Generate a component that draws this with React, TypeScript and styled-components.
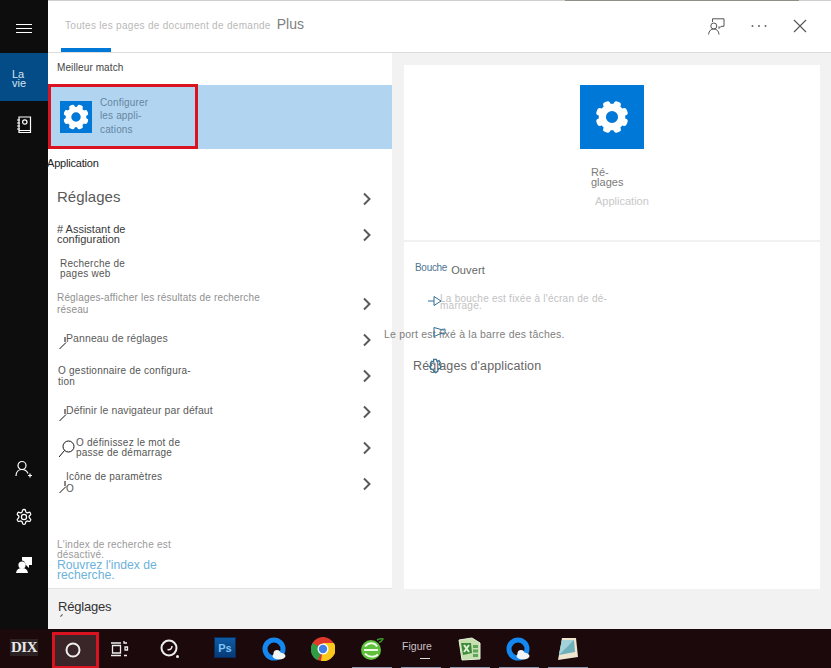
import styled, { createGlobalStyle } from 'styled-components';

const Global = createGlobalStyle`
  html, body {
    margin: 0;
    padding: 0;
    width: 831px;
    height: 668px;
    overflow: hidden;
    background: #f2f2f2;
    font-family: "Liberation Sans", Arial, sans-serif;
  }
  * { box-sizing: border-box; }
`;

const Page = styled.div`
  width: 831px;
  height: 668px;
  display: flex;
  flex-direction: column;
  overflow: hidden;
`;

const Window = styled.div`
  height: 629px;
  display: flex;
  border-top: 1px solid #cfcfcf;
  border-image: linear-gradient(to right, #cfcfcf 68%, #8f9088 68%, #8f9088 96%, #cfcfcf 96%) 1;
`;

const Sidebar = styled.nav`
  width: 48px;
  background: #0d0d0d;
  display: flex;
  flex-direction: column;
  padding-bottom: 40px;
  margin-top: -1px;
`;

const SideButton = styled.div<{ $height?: number; $pad?: number }>`
  height: ${({ $height }) => $height ?? 48}px;
  padding-top: ${({ $pad }) => $pad ?? 0}px;
  display: flex;
  align-items: center;
  justify-content: center;
  color: #fff;
  flex-shrink: 0;
`;

const LifeTab = styled.div`
  height: 48px;
  background: #044c88;
  color: #d5e4f0;
  font-size: 11px;
  line-height: 9px;
  padding: 17px 0 0 12px;
  flex-shrink: 0;
`;

const SideSpacer = styled.div`
  flex: 1;
`;

const Content = styled.div`
  flex: 1;
  display: flex;
  flex-direction: column;
  min-width: 0;
`;

const Header = styled.header`
  height: 52px;
  background: #fff;
  border-bottom: 1px solid #dcdcdc;
  display: flex;
  justify-content: space-between;
  padding-left: 13px;
  flex-shrink: 0;
`;

const Tab = styled.div`
  width: 50px;
  height: 51px;
  border-bottom: 4px solid #0078d7;
  display: flex;
  white-space: nowrap;
  align-items: baseline;
  gap: 6px;
  padding: 15px 0 0 4px;
`;

const TabMuted = styled.span`
  font-size: 10px;
  letter-spacing: 0.3px;
  color: #b9b9b9;
`;

const TabMore = styled.span`
  font-size: 14px;
  color: #808080;
`;

const HeaderActions = styled.div`
  display: flex;
  align-items: center;
  gap: 26px;
  padding: 0 24px 1px 0;
  color: #555;
`;

const Body = styled.div`
  flex: 1;
  display: flex;
  min-height: 0;
`;

const LeftColumn = styled.section`
  width: 344px;
  display: flex;
  flex-direction: column;
`;

const ResultList = styled.div`
  flex: 1;
  background: #fff;
  border-bottom: 1px solid #e2e2e2;
`;

const BestLabel = styled.div`
  height: 32px;
  padding: 9px 0 0 9px;
  font-size: 10px;
  letter-spacing: 0.1px;
  color: #444;
`;

const BestMatch = styled.div`
  height: 64px;
  background: #b1d5f1;
  position: relative;
  display: flex;
  align-items: center;
  gap: 8px;
  padding-left: 12px;
`;

const RedFrame = styled.div<{ $w: number; $h: number }>`
  position: absolute;
  left: 0;
  top: -1px;
  width: ${({ $w }) => $w}px;
  height: ${({ $h }) => $h}px;
  border: 3px solid #d9131f;
  pointer-events: none;
`;

const AppTile = styled.div<{ $size: number }>`
  width: ${({ $size }) => $size}px;
  height: ${({ $size }) => $size}px;
  background: #0078d7;
  display: flex;
  align-items: center;
  justify-content: center;
  flex-shrink: 0;
`;

const BestText = styled.div`
  font-size: 10px;
  line-height: 13.5px;
  letter-spacing: 0.15px;
  color: #66859f;
  margin-top: -2px;
`;

const CategoryLabel = styled.div`
  height: 32px;
  padding: 8px 0 0 0;
  margin-left: -1px;
  font-size: 11px;
  letter-spacing: -0.2px;
  color: #222;
`;

const Row = styled.div<{ $height?: number; $indent?: number }>`
  height: ${({ $height }) => $height ?? 36}px;
  position: relative;
  display: flex;
  align-items: center;
  justify-content: space-between;
  padding: 0 20px 0 ${({ $indent }) => $indent ?? 9}px;
`;

type Tone = 'title' | 'strong' | 'soft' | 'faint' | 'mid';

const RowText = styled.div<{ $tone: Tone; $top?: number; $leading?: number }>`
  margin-top: ${({ $top }) => $top ?? 0}px;
  white-space: pre-line;
  ${({ $tone }) =>
    ({
      title: 'font-size: 15px; color: #595959;',
      strong: 'font-size: 11px; line-height: 10px; color: #3a3a3a;',
      soft: 'font-size: 10px; line-height: 10px; letter-spacing: 0.24px; color: #555;',
      faint: 'font-size: 10px; line-height: 12px; letter-spacing: 0.17px; color: #8f8f8f;',
      mid: 'font-size: 10.5px; line-height: 11px; letter-spacing: 0.1px; color: #5c5c5c;',
    })[$tone]}
  ${({ $leading }) => $leading && `line-height: ${$leading}px;`}
`;

const SearchMark = styled.svg`
  position: absolute;
  left: 11px;
  top: 7px;
`;

const IndexNote = styled.div`
  padding: 38px 0 0 9px;
`;

const NoteText = styled.div`
  font-size: 10px;
  line-height: 10px;
  letter-spacing: 0.22px;
  color: #999;
  white-space: pre-line;
`;

const NoteLink = styled.div`
  font-size: 12.2px;
  line-height: 10px;
  color: #6db2da;
  white-space: pre-line;
`;

const FooterBar = styled.div`
  height: 40px;
  background: #f2f2f2;
  position: relative;
  padding: 10px 0 0 10px;
  font-size: 13px;
  letter-spacing: -0.2px;
  color: #333;
  flex-shrink: 0;
`;

const FooterTick = styled.span`
  position: absolute;
  left: 12px;
  top: 26px;
  width: 3px;
  height: 1px;
  background: #555;
  transform: rotate(-45deg);
`;

const DetailPanel = styled.section`
  width: 416px;
  margin: 12px 0 40px 12px;
  background: #fff;
  display: flex;
  flex-direction: column;
`;

const DetailHero = styled.div`
  height: 177px;
  border-bottom: 2px solid #f1f1f1;
  padding: 20px 0 0 176px;
`;

const HeroName = styled.div`
  font-size: 11px;
  line-height: 10px;
  color: #7b7b7b;
  margin: 18px 0 0 11px;
  white-space: pre-line;
`;

const HeroKind = styled.div`
  font-size: 11px;
  color: #c8c8c8;
  margin: 8px 0 0 15px;
`;

const ActionList = styled.div`
  display: flex;
  flex-direction: column;
`;

const OpenRow = styled.div`
  display: flex;
  align-items: flex-start;
  gap: 4px;
  padding: 20px 0 0 11px;
`;

const MouthLabel = styled.span`
  font-size: 10px;
  letter-spacing: -0.3px;
  color: #4f7590;
`;

const OpenLabel = styled.span`
  font-size: 11px;
  letter-spacing: 0.15px;
  color: #666;
  margin-top: 2px;
`;

const PinRow = styled.div<{ $indent: number; $top: number }>`
  position: relative;
  margin: ${({ $top }) => $top}px 0 0 ${({ $indent }) => $indent}px;
`;

const PinText = styled.div`
  font-size: 10px;
  line-height: 7px;
  letter-spacing: 0.25px;
  color: #c2c2c2;
  white-space: pre-line;
`;

const PinWide = styled.div`
  font-size: 10.5px;
  letter-spacing: 0.2px;
  color: #808080;
  white-space: nowrap;
`;

const PinMark = styled.svg<{ $left: number; $top: number }>`
  position: absolute;
  left: ${({ $left }) => $left}px;
  top: ${({ $top }) => $top}px;
`;

const AppSettings = styled.div`
  position: relative;
  margin: 19px 0 0 9px;
  font-size: 12.5px;
  letter-spacing: 0.13px;
  color: #666;
`;

const Taskbar = styled.footer`
  height: 39px;
  background: #1c090c;
  display: flex;
  align-items: center;
  position: relative;
`;

const TaskSlot = styled.div<{ $width: number }>`
  width: ${({ $width }) => $width}px;
  height: 100%;
  display: flex;
  align-items: center;
  justify-content: center;
  flex-shrink: 0;
  position: relative;
`;

const SearchSlot = styled.div`
  width: 47px;
  height: 36px;
  margin: 3px 0 0 4px;
  padding: 0 6px 2px 0;
  background: #3a2628;
  border: 3px solid #d9131f;
  border-bottom-width: 2px;
  display: flex;
  align-items: center;
  justify-content: center;
  flex-shrink: 0;
`;

const DixLogo = styled.div`
  font-family: "Liberation Serif", serif;
  font-weight: 700;
  font-size: 15px;
  letter-spacing: -0.5px;
  color: #e8e8e8;
  background: #2c2224;
  padding: 0 1px;
  margin-top: -2px;
`;

const PsTile = styled.div`
  width: 22px;
  height: 21px;
  background: linear-gradient(#0e5ca4, #073a78);
  border: 1px solid #072c5c;
  color: #7fc4f4;
  font-size: 11px;
  font-weight: 700;
  display: flex;
  align-items: center;
  justify-content: center;
  margin-top: -2px;
`;

const FigureLabel = styled.div`
  font-size: 10.5px;
  color: #c9c4c6;
  margin-top: -6px;
`;

const FigureUnderline = styled.span`
  position: absolute;
  left: 25px;
  bottom: 9px;
  width: 10px;
  height: 1px;
  background: #ddd;
`;

const RunningMark = styled.span<{ $left: number; $width: number }>`
  position: absolute;
  bottom: 0;
  left: ${({ $left }) => $left}px;
  width: ${({ $width }) => $width}px;
  height: 1px;
  background: #8d98ad;
`;

function Gear({ size }: { size: number }) {
  const teeth = [0, 45, 90, 135, 180, 225, 270, 315];
  return (
    <svg width={size} height={size} viewBox="0 0 32 32">
      {teeth.map((a) => (
        <rect key={a} x="12.7" y="1.5" width="6.6" height="8" rx="2.4" fill="#fff" transform={`rotate(${a + 22.5} 16 16)`} />
      ))}
      <circle cx="16" cy="16" r="8.6" fill="none" stroke="#fff" strokeWidth="6.4" />
    </svg>
  );
}

function Chevron() {
  return (
    <svg width="10" height="14" viewBox="0 0 10 14" fill="none">
      <path d="M2 1.5 7.5 7 2 12.5" stroke="#5a5a5a" strokeWidth="2" />
    </svg>
  );
}

function Hamburger() {
  return (
    <svg width="16" height="10" viewBox="0 0 16 10" stroke="#fff" strokeWidth="1">
      <path d="M0 .5h16M0 4.5h16M0 8.5h16" />
    </svg>
  );
}

function NotebookIcon() {
  return (
    <svg width="16" height="18" viewBox="0 0 16 18" fill="none" stroke="#fff" strokeWidth="1.2">
      <path d="M3 1h11.5v15.5H3zM1 4h3M1 7h3M1 10h3M1 13h3M3 14.5h11.5" />
      <circle cx="8.8" cy="6" r="2.2" />
    </svg>
  );
}

function AddUserIcon() {
  return (
    <svg width="18" height="18" viewBox="0 0 18 18" fill="none" stroke="#fff" strokeWidth="1.2">
      <circle cx="7" cy="5.5" r="4" />
      <path d="M1 16c0-4 2.500-6.500 6-6.500s5 1.500 6 4M13 15.500h4M15 13.500v4" />
    </svg>
  );
}

function OutlineGear() {
  return (
    <svg width="18" height="18" viewBox="0 0 24 24" fill="none" stroke="#fff" strokeWidth="1.7" strokeLinejoin="round">
      <path d="M12.2 2h-.4a2 2 0 0 0-2 2v.2a2 2 0 0 1-1 1.700l-.4.200a2 2 0 0 1-2 0l-.2-.1a2 2 0 0 0-2.700.7l-.2.400a2 2 0 0 0 .7 2.700l.2.100a2 2 0 0 1 1 1.700v.500a2 2 0 0 1-1 1.700l-.2.100a2 2 0 0 0-.7 2.700l.2.400a2 2 0 0 0 2.700.7l.2-.1a2 2 0 0 1 2 0l.4.200a2 2 0 0 1 1 1.700v.200a2 2 0 0 0 2 2h.4a2 2 0 0 0 2-2v-.2a2 2 0 0 1 1-1.700l.4-.2a2 2 0 0 1 2 0l.2.100a2 2 0 0 0 2.700-.7l.2-.4a2 2 0 0 0-.7-2.700l-.2-.1a2 2 0 0 1-1-1.700v-.500a2 2 0 0 1 1-1.700l.2-.1a2 2 0 0 0 .7-2.700l-.2-.4a2 2 0 0 0-2.700-.7l-.2.100a2 2 0 0 1-2 0l-.4-.2a2 2 0 0 1-1-1.700V4a2 2 0 0 0-2-2z" />
      <circle cx="12" cy="12" r="3.400" />
    </svg>
  );
}

function FeedbackIcon() {
  return (
    <svg width="16" height="18" viewBox="0 0 16 18" fill="#fff">
      <circle cx="6" cy="9" r="3.600" />
      <path d="M0 17c.5-3.500 2.500-5 6-5s5.500 1.500 6 5z" />
      <path d="M6 1h10v8h-3v3l-3-3H9.500C9.500 6.500 8.500 5 6 4.600z" />
    </svg>
  );
}

function HeaderFeedback() {
  return (
    <svg width="17" height="17" viewBox="0 0 17 17" fill="none" stroke="#555" strokeWidth="1">
      <path d="M4.500 4V.8h11.500v7.500h-3l-2 2.200V8.300" />
      <circle cx="5.800" cy="8" r="3" />
      <path d="M.6 16.500c.3-3.500 2-5.500 5.200-5.500s4.900 2 5.200 5.500" />
    </svg>
  );
}

function Dots() {
  return (
    <svg width="16" height="4" viewBox="0 0 16 4" fill="#666">
      <circle cx="1.500" cy="2" r="1" />
      <circle cx="8" cy="2" r="1" />
      <circle cx="14.500" cy="2" r="1" />
    </svg>
  );
}

function CloseIcon() {
  return (
    <svg width="14" height="14" viewBox="0 0 14 14" stroke="#555" strokeWidth="1.100">
      <path d="M1 1l12 12M13 1 1 13" />
    </svg>
  );
}

function TaskViewIcon() {
  return (
    <svg width="18" height="18" viewBox="0 0 18 18" fill="none" stroke="#eee" strokeWidth="1.300">
      <path d="M0 3h10M0 15.500h10M1.500 5.500h8v7.500h-8zM13 1v2h3M13 15.500h3M14 7h2.500v3H14z" />
    </svg>
  );
}

function CortanaDial() {
  return (
    <svg width="22" height="22" viewBox="0 0 22 22" fill="none" stroke="#eee">
      <circle cx="10" cy="10" r="7.500" strokeWidth="2" />
      <path d="M13 8c0 3-2 4-4.500 3.500" strokeWidth="1.500" />
      <circle cx="18.500" cy="18.500" r="1.500" fill="#eee" stroke="none" />
    </svg>
  );
}

function CloudQ() {
  return (
    <svg width="24" height="24" viewBox="0 0 24 24" fill="none">
      <circle cx="12" cy="12" r="9" stroke="#1488f0" strokeWidth="5" />
      <ellipse cx="17" cy="19" rx="6.500" ry="3.500" fill="#f3f5f7" />
      <circle cx="15" cy="16.500" r="3.500" fill="#f3f5f7" />
    </svg>
  );
}

function ChromeIcon() {
  return (
    <svg width="24" height="24" viewBox="0 0 24 24">
      <circle cx="12" cy="12" r="12" fill="#e0392c" />
      <path d="M12 12 1.600 6a12 12 0 0 0 5 17.200z" fill="#2f9c46" />
      <path d="M12 6h10.900A12 12 0 0 1 10 23.800L12 12z" fill="#f8c91c" />
      <circle cx="12" cy="12" r="5.500" fill="#fff" />
      <circle cx="12" cy="12" r="4.200" fill="#3f7fe6" />
    </svg>
  );
}

function GreenBrowser() {
  return (
    <svg width="24" height="24" viewBox="0 0 24 24" fill="none">
      <circle cx="11" cy="13" r="10" fill="#5fc03c" />
      <path d="M4 13h14M5 9.500c3-4.500 10-4.500 12 0M5 16.500c3 4 10 4 13 1" stroke="#eefbe6" strokeWidth="2" />
      <path d="M17 3c3-1.500 5-1.500 6-1-1 2-2.500 3-4 3.500" stroke="#3d9a2a" strokeWidth="1.500" />
    </svg>
  );
}

function SheetIcon() {
  return (
    <svg width="24" height="24" viewBox="0 0 24 24">
      <path d="M2 3 15 1l8 5v16L5 23z" fill="#c5e0ae" stroke="#e8f2dd" />
      <path d="M4 6h10l1 10-9 2z" fill="#3c8a3c" />
      <path d="M7 8l5 7M12 8l-5 7" stroke="#dff0d0" strokeWidth="2" />
      <path d="M16 8h5v3h-5zM16 12.500h5v3h-5zM16 17h5v3h-5z" fill="#5fa55a" />
    </svg>
  );
}

function NotepadIcon() {
  return (
    <svg width="24" height="24" viewBox="0 0 24 24">
      <path d="M7 1h14l2 19-20 3z" fill="#eee6cf" />
      <path d="M7 3h12l1 12-16 3z" fill="#6fb0bd" />
      <path d="M7 3h12L4 18z" fill="#a3d2d8" />
    </svg>
  );
}

const searchRows = [
  { id: 'panel', text: 'Panneau de réglages', tone: 'mid' as Tone, indent: 18, top: -3, leading: 0, mark: 'stroke' },
  { id: 'manager', text: 'O gestionnaire de configura-\ntion', tone: 'soft' as Tone, indent: 10, top: 0, leading: 11, mark: '' },
  { id: 'browser', text: 'Définir le navigateur par défaut', tone: 'mid' as Tone, indent: 18, top: -4, leading: 0, mark: 'stroke' },
  { id: 'password', text: 'O définissez le mot de\npasse de démarrage', tone: 'soft' as Tone, indent: 28, top: 0, leading: 0, mark: 'loupe' },
  { id: 'icon', text: 'Icône de paramètres\nO', tone: 'soft' as Tone, indent: 18, top: -3, leading: 12, mark: 'stroke' },
];

function SearchGlyph({ kind }: { kind: string }) {
  return (
    <SearchMark width="20" height="24" viewBox="0 0 20 24" fill="none" stroke="#111" strokeWidth="1">
      {kind === 'loupe' ? (
        <>
          <circle cx="9.500" cy="9.500" r="5.500" />
          <path d="M5.500 13.500 0 20" />
        </>
      ) : (
        <path d="M6 8v5M7 13.500 0.500 20" />
      )}
    </SearchMark>
  );
}

export default function App() {
  return (
    <Page>
      <Global />
      <Window>
        <Sidebar>
          <SideButton $height={53} $pad={5}>
            <Hamburger />
          </SideButton>
          <LifeTab>
            La
            <br />
            vie
          </LifeTab>
          <SideButton>
            <NotebookIcon />
          </SideButton>
          <SideSpacer />
          <SideButton>
            <AddUserIcon />
          </SideButton>
          <SideButton>
            <OutlineGear />
          </SideButton>
          <SideButton>
            <FeedbackIcon />
          </SideButton>
        </Sidebar>
        <Content>
          <Header>
            <Tab>
              <TabMuted>Toutes les pages de document de demande</TabMuted>
              <TabMore>Plus</TabMore>
            </Tab>
            <HeaderActions>
              <HeaderFeedback />
              <Dots />
              <CloseIcon />
            </HeaderActions>
          </Header>
          <Body>
            <LeftColumn>
              <ResultList>
                <BestLabel>Meilleur match</BestLabel>
                <BestMatch>
                  <RedFrame $w={150} $h={65} />
                  <AppTile $size={32}>
                    <Gear size={28} />
                  </AppTile>
                  <BestText>
                    Configurer
                    <br />
                    les appli-
                    <br />
                    cations
                  </BestText>
                </BestMatch>
                <CategoryLabel>Application</CategoryLabel>
                <Row>
                  <RowText $tone="title" $top={-6}>
                    Réglages
                  </RowText>
                  <Chevron />
                </Row>
                <Row>
                  <RowText $tone="strong" $top={-2}>
                    {'# Assistant de\nconfiguration'}
                  </RowText>
                  <Chevron />
                </Row>
                <Row $height={32} $indent={12}>
                  <RowText $tone="soft" $top={-1}>
                    {'Recherche de\npages web'}
                  </RowText>
                </Row>
                <Row $height={37}>
                  <RowText $tone="faint">{'Réglages-afficher les résultats de recherche\nréseau'}</RowText>
                  <Chevron />
                </Row>
                {searchRows.map((row) => (
                  <Row key={row.id} $indent={row.indent}>
                    {row.mark && <SearchGlyph kind={row.mark} />}
                    <RowText $tone={row.tone} $top={row.top} $leading={row.leading}>
                      {row.text}
                    </RowText>
                    <Chevron />
                  </Row>
                ))}
                <IndexNote>
                  <NoteText>{"L'index de recherche est\ndésactivé."}</NoteText>
                  <NoteLink>{"Rouvrez l'index de\nrecherche."}</NoteLink>
                </IndexNote>
              </ResultList>
              <FooterBar>
                Réglages
                <FooterTick />
              </FooterBar>
            </LeftColumn>
            <DetailPanel>
              <DetailHero>
                <AppTile $size={64}>
                  <Gear size={36} />
                </AppTile>
                <HeroName>{'Ré-\nglages'}</HeroName>
                <HeroKind>Application</HeroKind>
              </DetailHero>
              <ActionList>
                <OpenRow>
                  <MouthLabel>Bouche</MouthLabel>
                  <OpenLabel>Ouvert</OpenLabel>
                </OpenRow>
                <PinRow $indent={36} $top={19}>
                  <PinMark $left={-12} $top={0} width="16" height="12" viewBox="0 0 16 12" fill="none" stroke="#2f6d92">
                    <path d="M0 6h6M6 1.500v9L13 6z" />
                  </PinMark>
                  <PinText>{'La bouche est fixée à l\'écran de dé-\nmarrage.'}</PinText>
                </PinRow>
                <PinRow $indent={-20} $top={19}>
                  <PinMark $left={49} $top={-2} width="13" height="12" viewBox="0 0 13 12" fill="none" stroke="#2f6d92">
                    <path d="M1 1.500 8 3.500 12 3v5l-4-.5-7 3z" />
                  </PinMark>
                  <PinWide>Le port est fixé à la barre des tâches.</PinWide>
                </PinRow>
                <AppSettings>
                  <PinMark $left={14} $top={-2} width="16" height="18" viewBox="0 0 24 24" fill="none" stroke="#3f7391" strokeWidth="2">
                    <path d="M10 2h4l1 3 3-1 2 3-2 3 3 2-1 4-3 0-1 4-3 2-3-2-1-3-3 0-2-4 3-2-2-3 2-3 3 1z" />
                  </PinMark>
                  Réglages d'application
                </AppSettings>
              </ActionList>
            </DetailPanel>
          </Body>
        </Content>
      </Window>
      <Taskbar>
        <TaskSlot $width={48}>
          <DixLogo>DIX</DixLogo>
        </TaskSlot>
        <SearchSlot>
          <svg width="16" height="16" viewBox="0 0 16 16" fill="none" stroke="#eee" strokeWidth="2">
            <circle cx="8" cy="8" r="6.500" />
          </svg>
        </SearchSlot>
        <TaskSlot $width={42}>
          <TaskViewIcon />
        </TaskSlot>
        <TaskSlot $width={58}>
          <CortanaDial />
        </TaskSlot>
        <TaskSlot $width={52}>
          <PsTile>Ps</PsTile>
        </TaskSlot>
        <TaskSlot $width={46}>
          <CloudQ />
        </TaskSlot>
        <TaskSlot $width={52}>
          <ChromeIcon />
        </TaskSlot>
        <TaskSlot $width={46}>
          <GreenBrowser />
        </TaskSlot>
        <TaskSlot $width={44}>
          <FigureLabel>Figure</FigureLabel>
          <FigureUnderline />
        </TaskSlot>
        <TaskSlot $width={60}>
          <SheetIcon />
        </TaskSlot>
        <TaskSlot $width={38}>
          <CloudQ />
        </TaskSlot>
        <TaskSlot $width={60}>
          <NotepadIcon />
        </TaskSlot>
        <RunningMark $left={352} $width={40} />
        <RunningMark $left={401} $width={40} />
        <RunningMark $left={450} $width={40} />
        <RunningMark $left={499} $width={40} />
        <RunningMark $left={548} $width={40} />
      </Taskbar>
    </Page>
  );
}
